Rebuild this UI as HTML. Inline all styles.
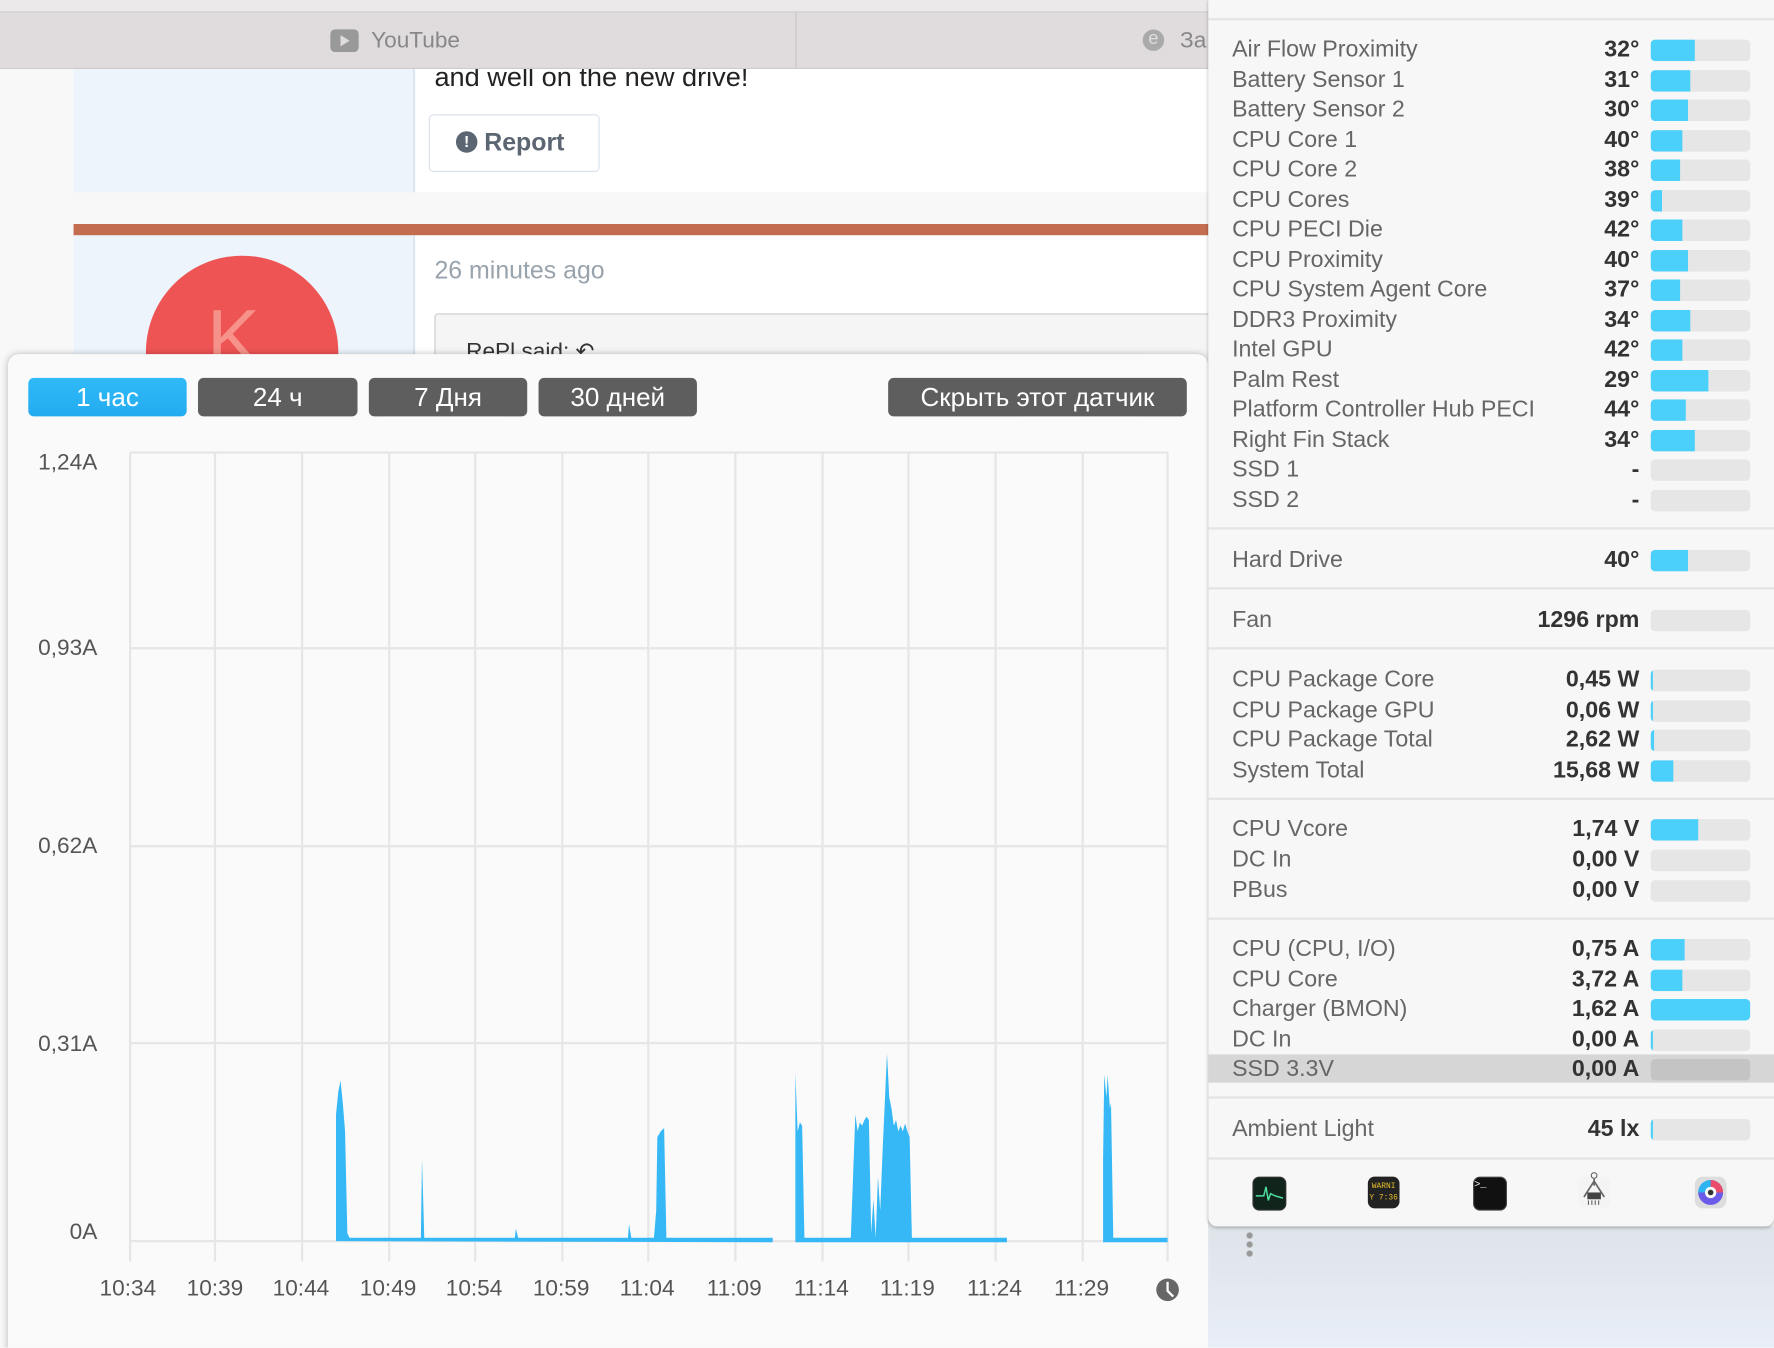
<!DOCTYPE html>
<html><head><meta charset="utf-8">
<style>
html,body{margin:0;padding:0;width:1774px;height:1348px;overflow:hidden;background:#f7f7f7;}
#w{position:absolute;left:0;top:0;width:1568px;height:1191px;transform:scale(1.13138);transform-origin:0 0;font-family:"Liberation Sans","DejaVu Sans",sans-serif;overflow:hidden;background:#f8f8f8;}
.a{position:absolute;}
.btn{position:absolute;top:334px;height:34px;border-radius:5px;background:#5e5e5e;color:#fff;font-size:23px;line-height:34px;text-align:center;}
.yl{position:absolute;left:0;width:86px;text-align:right;font-size:20px;color:#555;}
.xl{position:absolute;top:1128px;width:70px;margin-left:-35px;text-align:center;font-size:20px;color:#555;}
.r{position:absolute;left:1068px;width:500px;height:26px;font-size:20.5px;line-height:28px;}
.r .l{position:absolute;left:21px;color:#666;}
.r .v{position:absolute;right:119px;color:#333;font-weight:bold;}
.r .b{position:absolute;left:391px;top:5px;width:88px;height:19px;border-radius:4px;background:#e6e6e6;overflow:hidden;}
.r .b i{display:block;height:100%;background:#4bd0fb;}
.sep{position:absolute;left:1068px;width:500px;height:2px;background:#e4e4e4;}
.ic{position:absolute;top:1040px;width:28px;height:28px;border-radius:6px;}
</style></head><body><div id="w">
<div class="a" style="left:0;top:0;width:1068px;height:10px;background:#ece9ea;border-bottom:1px solid #d0cccd"></div>
<div class="a" style="left:65px;top:60px;width:300px;height:110px;background:#edf4fc;border-right:2px solid #dbe5f0"></div>
<div class="a" style="left:367px;top:60px;width:701px;height:110px;background:#fff"></div>
<div class="a" style="left:384px;top:55px;font-size:24px;color:#222">and well on the new drive!</div>
<div class="a" style="left:379px;top:101px;width:149px;height:49px;border:1px solid #d6dfea;border-radius:4px;background:#fff"></div>
<div class="a" style="left:403px;top:116px;width:19px;height:19px;border-radius:50%;background:#5b6672;color:#fff;font-size:14px;font-weight:bold;text-align:center;line-height:19px">!</div>
<div class="a" style="left:428px;top:113px;font-size:22px;font-weight:bold;color:#5b6672">Report</div>
<div class="a" style="left:65px;top:198px;width:1003px;height:10px;background:#c36c50"></div>
<div class="a" style="left:65px;top:208px;width:300px;height:110px;background:#edf4fc;border-right:2px solid #dbe5f0"></div>
<div class="a" style="left:367px;top:208px;width:701px;height:110px;background:#fff"></div>
<div class="a" style="left:129px;top:226px;width:170px;height:170px;border-radius:50%;background:#ee5454"></div>
<div class="a" style="left:183px;top:258px;font-size:70px;color:#f7928a">K</div>
<div class="a" style="left:384px;top:226px;font-size:22px;color:#99a3ad">26 minutes ago</div>
<div class="a" style="left:384px;top:277px;width:690px;height:60px;background:#f5f5f5;border:1px solid #ccc;border-radius:3px"></div>
<div class="a" style="left:412px;top:298px;font-size:20px;color:#333">RePl said: ↶</div>
<div class="a" style="left:0;top:11px;width:1068px;height:49px;background:#e0dcdd;border-bottom:1px solid #d0cccd"></div>
<div class="a" style="left:703px;top:11px;width:1px;height:49px;background:#c8c4c5"></div>
<div class="a" style="left:292px;top:26px;width:25px;height:20px;border-radius:4px;background:#999"></div>
<div class="a" style="left:301px;top:31px;width:0;height:0;border-left:8px solid #e0dcdd;border-top:5px solid transparent;border-bottom:5px solid transparent"></div>
<div class="a" style="left:328px;top:25px;font-size:20px;color:#888">YouTube</div>
<div class="a" style="left:1010px;top:26px;width:19px;height:19px;border-radius:50%;background:#aaa;color:#e0dcdd;font-size:16px;line-height:18px;text-align:center">e</div>
<div class="a" style="left:1043px;top:25px;font-size:20px;color:#888">За</div>
<div class="a" style="left:7px;top:313px;width:1061px;height:900px;background:#fafafa;border-radius:10px;box-shadow:0 0 6px rgba(0,0,0,.25)"></div>
<div class="btn" style="left:25px;width:140px;background:linear-gradient(#31baf8,#22acf0)">1 час</div>
<div class="btn" style="left:175px;width:141px">24 ч</div>
<div class="btn" style="left:326px;width:140px">7 Дня</div>
<div class="btn" style="left:476px;width:140px">30 дней</div>
<div class="btn" style="left:785px;width:264px">Скрыть этот датчик</div>
<svg class="a" style="left:0;top:0" width="1068" height="1191">
<g stroke="#e6e6e6" stroke-width="2">
<line x1="115" y1="400" x2="1032" y2="400"/><line x1="115" y1="573" x2="1032" y2="573"/><line x1="115" y1="748" x2="1032" y2="748"/><line x1="115" y1="922" x2="1032" y2="922"/><line x1="115" y1="1097" x2="1032" y2="1097"/>
<line x1="115" y1="400" x2="115" y2="1115"/><line x1="190" y1="400" x2="190" y2="1115"/><line x1="267" y1="400" x2="267" y2="1115"/><line x1="344" y1="400" x2="344" y2="1115"/><line x1="420" y1="400" x2="420" y2="1115"/><line x1="497" y1="400" x2="497" y2="1115"/><line x1="573" y1="400" x2="573" y2="1115"/><line x1="650" y1="400" x2="650" y2="1115"/><line x1="727" y1="400" x2="727" y2="1115"/><line x1="803" y1="400" x2="803" y2="1115"/><line x1="880" y1="400" x2="880" y2="1115"/><line x1="957" y1="400" x2="957" y2="1115"/><line x1="1032" y1="400" x2="1032" y2="1115"/>
</g>
<g fill="#35b8f5">
<path d="M297,1097 L297,985 L299,965 L301,955 L303,975 L305,1000 L307,1090 L309,1094 L372,1094 L373,1024 L375,1094 L455,1094 L456,1086 L458,1094 L555,1094 L556,1082 L558,1094 L578,1094 L580,1070 L581,1005 L584,1000 L587,997 L589,1094 L683,1094 L683,1098 Z"/>
<path d="M703,1098 L703,948 L705,1000 L707,992 L709,995 L711,1094 L752,1094 L754,1040 L756,985 L758,1000 L760,992 L762,995 L764,990 L766,987 L768,990 L770,1090 L772,1060 L774,1094 L776,1040 L778,1070 L780,1020 L784,931 L786,970 L788,980 L790,995 L792,990 L794,1000 L796,995 L798,1000 L800,993 L802,1000 L804,1005 L806,1094 L890,1094 L890,1098 Z"/>
<path d="M975,1098 L975,1025 L976,950 L978,970 L979,950 L981,980 L982,975 L984,1094 L1032,1094 L1032,1098 Z"/>
</g>
<circle cx="1032" cy="1140" r="10" fill="#666"/><path d="M1032,1133 L1032,1141 L1037,1146" stroke="#fff" stroke-width="2" fill="none"/>
</svg>
<div class="yl" style="top:398px">1,24A</div>
<div class="yl" style="top:562px">0,93A</div>
<div class="yl" style="top:737px">0,62A</div>
<div class="yl" style="top:912px">0,31A</div>
<div class="yl" style="top:1078px">0A</div>
<div class="xl" style="left:113px">10:34</div><div class="xl" style="left:190px">10:39</div><div class="xl" style="left:266px">10:44</div><div class="xl" style="left:343px">10:49</div><div class="xl" style="left:419px">10:54</div><div class="xl" style="left:496px">10:59</div><div class="xl" style="left:572px">11:04</div><div class="xl" style="left:649px">11:09</div><div class="xl" style="left:726px">11:14</div><div class="xl" style="left:802px">11:19</div><div class="xl" style="left:879px">11:24</div><div class="xl" style="left:956px">11:29</div>
<div class="a" style="left:1068px;top:1084px;width:500px;height:107px;background:linear-gradient(#dfe3ea,#e8eef7)"></div>
<div class="a" style="left:1068px;top:0;width:500px;height:1084px;background:#f7f7f7;border-radius:0 0 8px 8px;box-shadow:0 1px 3px rgba(0,0,0,.25)"></div>
<div class="sep" style="top:16px"></div>
<div class="a" style="left:1101px;top:1088px;width:7px;height:24px;background:radial-gradient(circle,#999 2.5px,transparent 3px) 0 0/7px 8px"></div>
<div class="a" style="left:1068px;top:932px;width:500px;height:25px;background:#d6d6d6"></div>
<div class="r" style="top:30px"><span class="l">Air Flow Proximity</span><span class="v">32°</span><span class="b"><i style="width:39px"></i></span></div>
<div class="r" style="top:57px"><span class="l">Battery Sensor 1</span><span class="v">31°</span><span class="b"><i style="width:35px"></i></span></div>
<div class="r" style="top:83px"><span class="l">Battery Sensor 2</span><span class="v">30°</span><span class="b"><i style="width:33px"></i></span></div>
<div class="r" style="top:110px"><span class="l">CPU Core 1</span><span class="v">40°</span><span class="b"><i style="width:28px"></i></span></div>
<div class="r" style="top:136px"><span class="l">CPU Core 2</span><span class="v">38°</span><span class="b"><i style="width:26px"></i></span></div>
<div class="r" style="top:163px"><span class="l">CPU Cores</span><span class="v">39°</span><span class="b"><i style="width:10px"></i></span></div>
<div class="r" style="top:189px"><span class="l">CPU PECI Die</span><span class="v">42°</span><span class="b"><i style="width:28px"></i></span></div>
<div class="r" style="top:216px"><span class="l">CPU Proximity</span><span class="v">40°</span><span class="b"><i style="width:33px"></i></span></div>
<div class="r" style="top:242px"><span class="l">CPU System Agent Core</span><span class="v">37°</span><span class="b"><i style="width:26px"></i></span></div>
<div class="r" style="top:269px"><span class="l">DDR3 Proximity</span><span class="v">34°</span><span class="b"><i style="width:35px"></i></span></div>
<div class="r" style="top:295px"><span class="l">Intel GPU</span><span class="v">42°</span><span class="b"><i style="width:28px"></i></span></div>
<div class="r" style="top:322px"><span class="l">Palm Rest</span><span class="v">29°</span><span class="b"><i style="width:51px"></i></span></div>
<div class="r" style="top:348px"><span class="l">Platform Controller Hub PECI</span><span class="v">44°</span><span class="b"><i style="width:31px"></i></span></div>
<div class="r" style="top:375px"><span class="l">Right Fin Stack</span><span class="v">34°</span><span class="b"><i style="width:39px"></i></span></div>
<div class="r" style="top:401px"><span class="l">SSD 1</span><span class="v">-</span><span class="b"></span></div>
<div class="r" style="top:428px"><span class="l">SSD 2</span><span class="v">-</span><span class="b"></span></div>
<div class="sep" style="top:466px"></div>
<div class="r" style="top:481px"><span class="l">Hard Drive</span><span class="v">40°</span><span class="b"><i style="width:33px"></i></span></div>
<div class="sep" style="top:519px"></div>
<div class="r" style="top:534px"><span class="l">Fan</span><span class="v">1296 rpm</span><span class="b"></span></div>
<div class="sep" style="top:572px"></div>
<div class="r" style="top:587px"><span class="l">CPU Package Core</span><span class="v">0,45 W</span><span class="b"><i style="width:2px"></i></span></div>
<div class="r" style="top:614px"><span class="l">CPU Package GPU</span><span class="v">0,06 W</span><span class="b"><i style="width:2px"></i></span></div>
<div class="r" style="top:640px"><span class="l">CPU Package Total</span><span class="v">2,62 W</span><span class="b"><i style="width:3px"></i></span></div>
<div class="r" style="top:667px"><span class="l">System Total</span><span class="v">15,68 W</span><span class="b"><i style="width:20px"></i></span></div>
<div class="sep" style="top:705px"></div>
<div class="r" style="top:719px"><span class="l">CPU Vcore</span><span class="v">1,74 V</span><span class="b"><i style="width:42px"></i></span></div>
<div class="r" style="top:746px"><span class="l">DC In</span><span class="v">0,00 V</span><span class="b"></span></div>
<div class="r" style="top:773px"><span class="l">PBus</span><span class="v">0,00 V</span><span class="b"></span></div>
<div class="sep" style="top:811px"></div>
<div class="r" style="top:825px"><span class="l">CPU (CPU, I/O)</span><span class="v">0,75 A</span><span class="b"><i style="width:30px"></i></span></div>
<div class="r" style="top:852px"><span class="l">CPU Core</span><span class="v">3,72 A</span><span class="b"><i style="width:28px"></i></span></div>
<div class="r" style="top:878px"><span class="l">Charger (BMON)</span><span class="v">1,62 A</span><span class="b"><i style="width:88px"></i></span></div>
<div class="r" style="top:905px"><span class="l">DC In</span><span class="v">0,00 A</span><span class="b"><i style="width:2px"></i></span></div>
<div class="r" style="top:931px"><span class="l">SSD 3.3V</span><span class="v">0,00 A</span><span class="b" style="background:#c4c4c4"></span></div>
<div class="sep" style="top:969px"></div>
<div class="r" style="top:984px"><span class="l">Ambient Light</span><span class="v">45 lx</span><span class="b"><i style="width:2px"></i></span></div>
<div class="sep" style="top:1023px"></div>
<div class="ic" style="left:1107px;background:#10241c;border:1px solid #333"><svg width="28" height="28"><path d="M2,16 L9,16 L11,8 L13,20 L15,14 L19,16 L26,18" stroke="#4de0a0" stroke-width="1.3" fill="none"/></svg></div>
<div class="ic" style="left:1209px;background:#222;color:#e8c02a;font-size:7px;font-family:'Liberation Mono',monospace;line-height:10px;padding-top:4px;box-sizing:border-box;text-align:center;overflow:hidden">WARNI<br>Y 7:36</div>
<div class="ic" style="left:1302px;background:#111;border:1px solid #444;color:#fff;font-size:9px;line-height:12px;font-family:'Liberation Mono',monospace">&gt;_</div>
<div class="ic" style="left:1395px;background:#f4f4f4"><svg width="28" height="32" style="margin-top:-6px"><circle cx="14" cy="5" r="2.5" fill="none" stroke="#666"/><path d="M14,8 L14,14 M14,10 L5,24 M14,10 L23,24" stroke="#666" stroke-width="1.5" fill="none"/><rect x="8" y="20" width="12" height="6" fill="#444"/><path d="M9,27v4M12,27v4M15,27v4M18,27v4" stroke="#666"/></svg></div>
<div class="ic" style="left:1498px;background:#ddd;border-radius:7px"><svg width="28" height="28"><circle cx="14" cy="14" r="11" fill="#6a5be8"/><path d="M14,14 L14,3 A11,11 0 0 1 25,14 Z" fill="#e94b6a"/><path d="M14,14 L3,14 A11,11 0 0 1 14,3 Z" fill="#2eb4f0"/><circle cx="14" cy="14" r="5" fill="#fff"/><circle cx="14" cy="14" r="2.5" fill="#333"/></svg></div>
</div></body></html>
